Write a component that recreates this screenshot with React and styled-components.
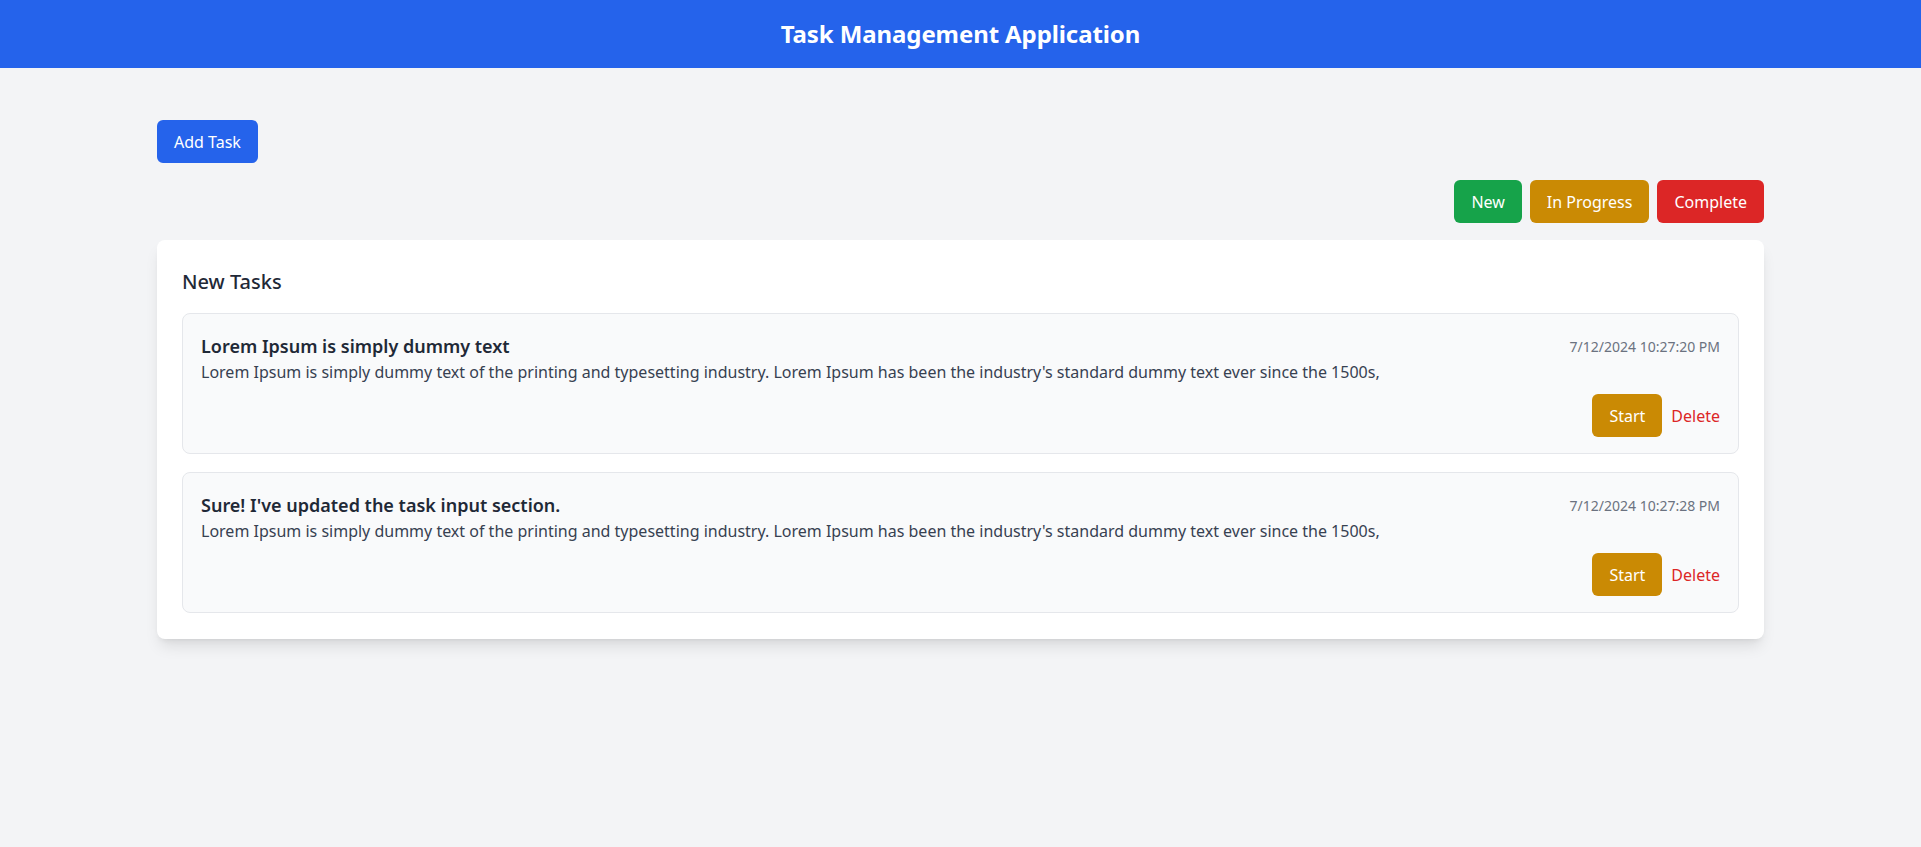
import styled, { createGlobalStyle } from "styled-components";

const GlobalStyle = createGlobalStyle`
  * { box-sizing: border-box; }
  body {
    margin: 0;
    background: #f3f4f6;
    font-family: "Noto Sans", "Open Sans", sans-serif;
    color: #1f2937;
  }
`;

const Header = styled.header`
  height: 68px;
  background: #2563eb;
  color: #ffffff;
  display: flex;
  align-items: center;
  justify-content: center;
`;

const Title = styled.h1`
  margin: 0;
  font-size: 24px;
  font-weight: 700;
  line-height: 32px;
  letter-spacing: -0.1px;
`;

const Main = styled.main`
  padding: 52px 157px 40px;
  display: flex;
  flex-direction: column;
`;

const Button = styled.button`
  height: 43px;
  padding: 0 17px;
  border: none;
  border-radius: 6px;
  font-family: inherit;
  font-size: 16px;
  color: #ffffff;
  background: ${({ $color }) => $color};
  cursor: pointer;
`;

const TopRow = styled.div`
  display: flex;
`;

const FilterRow = styled.div`
  margin-top: 17px;
  display: flex;
  justify-content: flex-end;
  gap: 8px;
`;

const Card = styled.section`
  margin-top: 17px;
  background: #ffffff;
  border-radius: 8px;
  padding: 28px 25px 26px;
  box-shadow: 0 10px 15px -3px rgba(0, 0, 0, 0.1), 0 4px 6px -4px rgba(0, 0, 0, 0.1);
`;

const CardTitle = styled.h2`
  margin: 0 0 17px;
  font-size: 20px;
  font-weight: 500;
  line-height: 28px;
  color: #1f2937;
`;

const TaskList = styled.div`
  display: flex;
  flex-direction: column;
  gap: 18px;
`;

const TaskItem = styled.div`
  background: #f9fafb;
  border: 1px solid #e5e7eb;
  border-radius: 8px;
  padding: 18px 18px 16px;
`;

const TaskHead = styled.div`
  display: flex;
  justify-content: space-between;
  align-items: center;
`;

const TaskTitle = styled.h3`
  margin: 0;
  font-size: 18px;
  font-weight: 600;
  line-height: 28px;
  color: #1f2937;
`;

const Stamp = styled.span`
  font-size: 14px;
  color: #6b7280;
`;

const Desc = styled.p`
  margin: 0;
  font-size: 16px;
  line-height: 24px;
  color: #374151;
`;

const Actions = styled.div`
  margin-top: 10px;
  display: flex;
  justify-content: flex-end;
  align-items: center;
  gap: 9px;
`;

const LinkButton = styled.button`
  border: none;
  background: none;
  padding: 0;
  font-family: inherit;
  font-size: 16px;
  color: #dc2626;
  cursor: pointer;
`;

const tasks = [
  {
    title: "Lorem Ipsum is simply dummy text",
    time: "7/12/2024 10:27:20 PM",
  },
  {
    title: "Sure! I've updated the task input section.",
    time: "7/12/2024 10:27:28 PM",
  },
];

const desc =
  "Lorem Ipsum is simply dummy text of the printing and typesetting industry. Lorem Ipsum has been the industry's standard dummy text ever since the 1500s,";

const App = () => {
  return (
    <>
      <GlobalStyle />
      <Header>
        <Title>Task Management Application</Title>
      </Header>
      <Main>
        <TopRow>
          <Button $color="#2563eb">Add Task</Button>
        </TopRow>
        <FilterRow>
          <Button $color="#16a34a">New</Button>
          <Button $color="#ca8a04">In Progress</Button>
          <Button $color="#dc2626">Complete</Button>
        </FilterRow>
        <Card>
          <CardTitle>New Tasks</CardTitle>
          <TaskList>
            {tasks.map((t) => (
              <TaskItem key={t.time}>
                <TaskHead>
                  <TaskTitle>{t.title}</TaskTitle>
                  <Stamp>{t.time}</Stamp>
                </TaskHead>
                <Desc>{desc}</Desc>
                <Actions>
                  <Button $color="#ca8a04">Start</Button>
                  <LinkButton>Delete</LinkButton>
                </Actions>
              </TaskItem>
            ))}
          </TaskList>
        </Card>
      </Main>
    </>
  );
};

export default App;
